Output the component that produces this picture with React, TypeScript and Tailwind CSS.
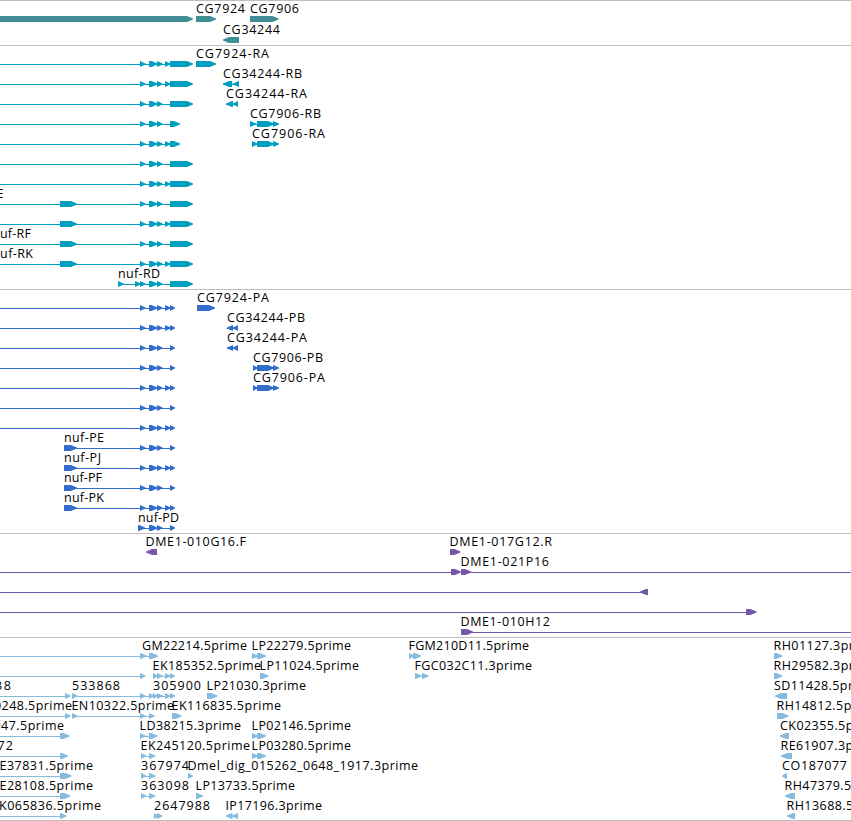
type Span = [number, number];

type Feature = {
  label?: string;
  // left and right edge of the label
  at?: Span;
  exons: Span[];
  reverse?: boolean;
  // extent of the intron line, when it runs past the exons
  line?: Span;
};

type Track = {
  name: string;
  fill: string;
  height: number;
  pitch: number;
  rows: Feature[][];
};

const WIDTH = 851;

const core: Span[] = [[140, 145.5], [149, 157.5], [157, 162.5]];
const small: Span = [165, 170.5];
const wide: Span = [170, 193];
const short: Span = [170, 180];
const last: Span = [170, 175];
const utr: Span = [60, 77];

const nuf = (exons: Span[], label?: string, at?: Span): Feature => ({
  label,
  at,
  exons,
  line: [-10, exons[exons.length - 1][0]],
});

const est = (label: string, start: number, end: number, exons: Span[], reverse = false): Feature => ({
  label,
  at: [start, end],
  exons,
  reverse,
});

const tracks: Track[] = [
  {
    name: "genes",
    fill: "fill-[#408e94]",
    height: 44,
    pitch: 21,
    rows: [
      [
        { exons: [[-10, 193]] },
        est("CG7924", 196, 245, [[196, 216]]),
        est("CG7906", 250, 299, [[250, 278.5]]),
      ],
      [est("CG34244", 223, 280, [[223, 239]], true)],
    ],
  },
  {
    name: "transcripts",
    fill: "fill-[#009fbf]",
    height: 243,
    pitch: 20,
    rows: [
      [nuf([...core, small, wide]), est("CG7924-RA", 196, 269, [[196, 216]])],
      [nuf([...core, small, wide]), est("CG34244-RB", 223, 302, [[223, 232], [233, 239]], true)],
      [nuf([...core, wide]), est("CG34244-RA", 226, 307, [[226, 233], [233, 238]], true)],
      [nuf([...core, short]), est("CG7906-RB", 250, 321, [[250, 256], [257, 274], [273, 279]])],
      [nuf([...core, small, short]), est("CG7906-RA", 252, 325, [[252, 257.5], [257, 274], [273, 279]])],
      [nuf([...core, wide])],
      [nuf([...core, small, wide])],
      [nuf([utr, ...core, wide], "nuf-RE", [-36, 3.5])],
      [nuf([utr, ...core, small, wide])],
      [nuf([utr, ...core, wide], "nuf-RF", [-8, 31])],
      [nuf([utr, ...core, small, wide], "nuf-RK", [-8, 33])],
      [est("nuf-RD", 118, 160, [[118, 123.5], [135, 140.5], ...core, wide])],
    ],
  },
  {
    name: "proteins",
    fill: "fill-[#326dcb]",
    height: 243,
    pitch: 20,
    rows: [
      [nuf([...core, small, last]), est("CG7924-PA", 197, 269, [[197, 215]])],
      [nuf([...core, small, last]), est("CG34244-PB", 227, 305, [[227, 233], [233, 238]], true)],
      [nuf([...core, last]), est("CG34244-PA", 227, 307, [[227, 233], [233, 238]], true)],
      [nuf([...core, last]), est("CG7906-PB", 253, 323, [[253, 257.5], [257, 274], [273, 279]])],
      [nuf([...core, small, last]), est("CG7906-PA", 253, 325, [[253, 257.5], [257, 274], [273, 279]])],
      [nuf([...core, last])],
      [nuf([...core, small, last])],
      [est("nuf-PE", 64, 104, [[64, 77], ...core, last])],
      [est("nuf-PJ", 64, 101, [[64, 77], ...core, small, last])],
      [est("nuf-PF", 64, 102, [[64, 77], ...core, last])],
      [est("nuf-PK", 64, 104, [[64, 77], ...core, small, last])],
      [est("nuf-PD", 138, 179, [[138, 145], core[1], core[2], last])],
    ],
  },
  {
    name: "clones",
    fill: "fill-[#7558a9]",
    height: 103,
    pitch: 20,
    rows: [
      [
        est("DME1-010G16.F", 145.5, 246, [[146, 157]], true),
        est("DME1-017G12.R", 449.5, 552, [[450, 460.5]]),
      ],
      [
        { exons: [[451, 461]], line: [-10, 452] },
        { ...est("DME1-021P16", 460.5, 549, [[461, 471]]), line: [462, 861] },
      ],
      [{ exons: [[640, 648]], reverse: true, line: [-10, 647] }],
      [{ exons: [[746, 756.5]], line: [-10, 747] }],
      [{ ...est("DME1-010H12", 460.5, 550, [[461, 473]]), line: [462, 861] }],
    ],
  },
  {
    name: "ests",
    fill: "fill-[#87bbdd]",
    height: 182,
    pitch: 20,
    rows: [
      [
        { ...est("GM22214.5prime", 142, 247, [[140, 146.5], [149, 158]]), line: [-10, 150] },
        est("LP22279.5prime", 251.5, 351, [[252, 258], [257, 266]]),
        est("FGM210D11.5prime", 408.5, 529, [[409, 414], [413, 421]]),
        est("RH01127.3prime", 773.5, 877, [[774, 782.5]]),
      ],
      [
        { exons: [[140, 145.5]], line: [-10, 141] },
        est("EK185352.5prime", 152.5, 261, [[153, 157.5], [157, 162.5], small, last]),
        est("LP11024.5prime", 259.5, 359, [[260, 268.5]]),
        est("FGC032C11.3prime", 414.5, 532, [[415, 421.5], [422, 428.5]]),
        est("RH29582.3prime", 773.5, 877, [[774, 782.5]]),
      ],
      [
        { ...est("38", -5, 11, [[65, 70.5]]), line: [-10, 66] },
        est("533868", 72, 120, [[72, 77.5], [140, 145.5], [149, 153.5], [153, 157.5], [157, 162.5], small, last]),
        { label: "305900", at: [153, 201], exons: [] },
        est("LP21030.3prime", 206.5, 306, [[207, 217.5]]),
        est("SD11428.5prime", 774, 876, [[775, 787]], true),
      ],
      [
        { ...est("0248.5prime", -6, 72, [[65, 70.5]]), line: [-10, 66] },
        est("EN10322.5prime", 71.5, 174, [[72, 77.5], [140, 145.5], [149, 154.5]]),
        est("EK116835.5prime", 171.5, 281, [[172, 181.5]]),
        est("RH14812.5prime", 776.5, 880, [[777, 788.5]]),
      ],
      [
        { ...est("947.5prime", -6.5, 64, [[60, 69.5]]), line: [-10, 61] },
        est("LD38215.3prime", 139.5, 241, [[140, 145.5], [149, 157.5]]),
        est("LP02146.5prime", 251.5, 351, [[252, 258], [257, 266]]),
        est("CK02355.5prime", 780, 882, [[780, 789]], true),
      ],
      [
        { ...est("72", -2.5, 13, [[60, 68]]), line: [-10, 61] },
        est("EK245120.5prime", 140.5, 250, [[141, 146], [149, 155.5]]),
        est("LP03280.5prime", 251.5, 351, [[252, 258], [257, 266]]),
        est("RE61907.3prime", 780.5, 882, [[781, 792]], true),
      ],
      [
        { ...est("E37831.5prime", -0.5, 93, [[60, 71.5]]), line: [-10, 61] },
        est("367974", 141, 189, [[141, 146], [149, 155.5]]),
        est("Dmel_dig_015262_0648_1917.3prime", 187.5, 418, [[188, 193]]),
        est("CO187077", 782, 847, [[782, 787]], true),
      ],
      [
        { ...est("E28108.5prime", -0.5, 93, [[60, 70.5]]), line: [-10, 61] },
        est("363098", 141, 189, [[141, 146], [149, 155.5]]),
        est("LP13733.5prime", 195.5, 295, [[196, 203]]),
        est("RH47379.5prime", 784.5, 888, [[785, 795]], true),
      ],
      [
        { ...est("K065836.5prime", -1, 101, [[60, 66.5]]), line: [-10, 61] },
        est("2647988", 154, 210, [[154, 158.5], [157, 162.5]]),
        est("IP17196.3prime", 225.5, 322, [[226, 232.5], [232, 238]], true),
        est("RH13688.5prime", 786.5, 890, [[787, 795]], true),
      ],
    ],
  },
];

function exonPoints([start, end]: Span, top: number, reverse?: boolean) {
  const tip = Math.min(6, end - start);
  const tail = reverse ? end : start;
  const neck = reverse ? start + tip : end - tip;
  const point = reverse ? start : end;
  return [
    [tail, top],
    [neck, top],
    [point, top + 2.5],
    [point, top + 3.5],
    [neck, top + 6],
    [tail, top + 6],
  ].join(" ");
}

function FeatureGlyph({ feature, y }: { feature: Feature; y: number }) {
  const { label, at, exons, reverse } = feature;
  const line: Span | undefined =
    feature.line ?? (exons.length > 1 ? [exons[0][0], exons[exons.length - 1][0] + 1] : undefined);

  return (
    <g>
      {line && <rect x={line[0]} y={y + 18} width={line[1] - line[0]} height={1} />}
      {exons.map((exon, i) => (
        <polygon key={i} points={exonPoints(exon, y + 15, reverse)} />
      ))}
      {label && at && (
        <text x={at[0]} y={y + 12} textLength={at[1] - at[0]} className="fill-black">
          {label}
        </text>
      )}
    </g>
  );
}

function TrackPanel({ track }: { track: Track }) {
  return (
    <section className="border-t border-[#bebebe]">
      <svg
        width={WIDTH}
        height={track.height}
        className={`block overflow-hidden font-['Open_Sans',sans-serif] text-[12.5px] ${track.fill}`}
      >
        {track.rows.map((row, i) =>
          row.map((feature, j) => (
            <FeatureGlyph key={`${track.name}-${i}-${j}`} feature={feature} y={i * track.pitch} />
          ))
        )}
      </svg>
    </section>
  );
}

export default function App() {
  return (
    <main className="flex w-[851px] flex-col overflow-hidden border-b border-[#bebebe] bg-white">
      {tracks.map((track) => (
        <TrackPanel key={track.name} track={track} />
      ))}
    </main>
  );
}
